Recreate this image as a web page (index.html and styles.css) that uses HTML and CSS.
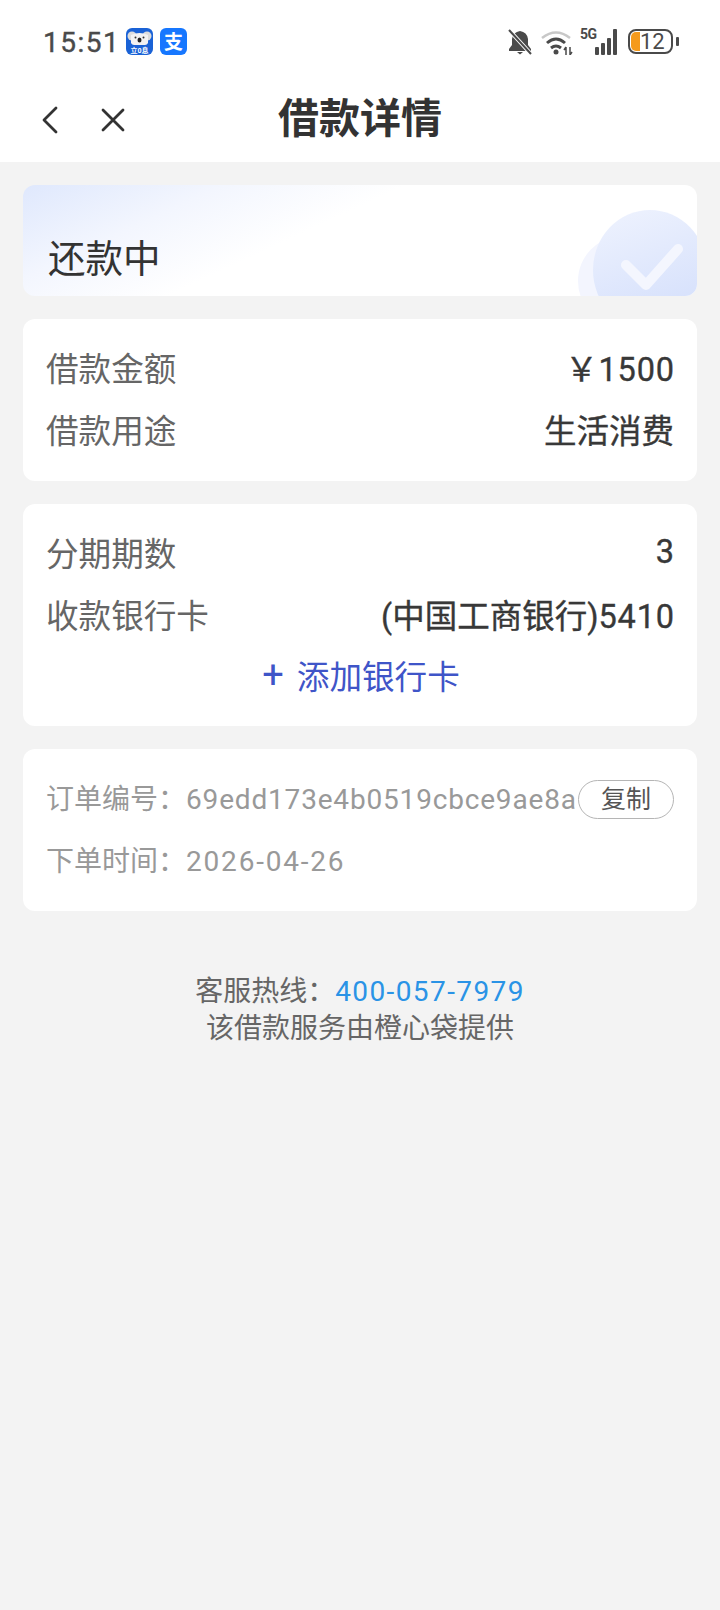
FILE: index.html
```html
<!DOCTYPE html>
<html lang="zh">
<head>
<meta charset="utf-8">
<title>借款详情</title>
<link rel="stylesheet" href="styles.css">
</head>
<body>
<header class="top">
  <div class="status">
    <div class="status-left">
      <span class="time">15:51</span>
      <svg class="app" viewBox="0 0 27 27"><rect width="27" height="27" rx="6" fill="#1a62d6"/><circle cx="6" cy="8" r="4.500" fill="#dcdcdc"/><circle cx="21" cy="8" r="4.500" fill="#dcdcdc"/><path d="M5 7q8.500-4 17 0v8q-1 2-3 2H8q-2 0-3-2z" fill="#f2f2f2"/><ellipse cx="13.500" cy="12" rx="2" ry="2.500" fill="#222"/><circle cx="9.500" cy="9.500" r="1" fill="#333"/><circle cx="17.500" cy="9.500" r="1" fill="#333"/><text class="app-small" x="13.500" y="25" text-anchor="middle">立0息</text></svg>
      <svg class="app" viewBox="0 0 27 27"><rect width="27" height="27" rx="6" fill="#1677ff"/><text class="app-big" x="13.500" y="21" text-anchor="middle">支</text></svg>
    </div>
    <div class="status-right">
      <svg class="i-bell" viewBox="0 0 24 26"><path d="M12 2q7 1 8 8v6l3 4v2H1v-2l3-4v-6q1-7 8-8zM9 23h6l-3 2.500z" fill="#4a4a4a"/><path d="M1 1l22 24" stroke="#fff" stroke-width="4"/><path d="M1 1l22 24" stroke="#4a4a4a" stroke-width="2"/></svg>
      <svg class="i-wifi" viewBox="0 0 32 26"><path d="M1 9q14-11 28 0" stroke="#c8c8c8" stroke-width="2.500" fill="none"/><path d="M6 14q9-8 18 0M10 19q5-4 10 0" stroke="#4a4a4a" stroke-width="3" fill="none"/><circle cx="15" cy="23" r="2.500" fill="#4a4a4a"/><path d="M25 18v8M29 18v8M23 21l2-3M31 23l-2 3" stroke="#4a4a4a" stroke-width="1.500" fill="none"/></svg>
      <div class="signal">
        <span class="five-g">5G</span>
        <svg class="i-signal" viewBox="0 0 28 26"><rect x="0" y="18" width="4" height="8" rx="1" fill="#4a4a4a"/><rect x="6" y="14" width="4" height="12" rx="1" fill="#4a4a4a"/><rect x="12" y="9" width="4" height="17" rx="1" fill="#4a4a4a"/><rect x="18" y="0" width="4" height="26" rx="1" fill="#4a4a4a"/></svg>
      </div>
      <div class="battery">
        <div class="batt-body"><span class="batt-fill"></span><span class="batt-num">12</span></div>
        <span class="batt-cap"></span>
      </div>
    </div>
  </div>
  <nav class="nav">
    <div class="nav-icons">
      <svg class="i-back" viewBox="0 0 16 28"><path d="M14 2L2 14l12 12" stroke="#333" stroke-width="2.800" fill="none" stroke-linecap="round" stroke-linejoin="round"/></svg>
      <svg class="i-close" viewBox="0 0 24 24"><path d="M2 2l20 20M22 2L2 22" stroke="#333" stroke-width="2.800" fill="none" stroke-linecap="round"/></svg>
    </div>
    <h1 class="title">借款详情</h1>
  </nav>
</header>
<main class="content">
  <section class="card status-card">
    <div class="badge">
      <span class="badge-shadow"></span>
      <span class="badge-circle"></span>
      <svg class="badge-check" viewBox="0 0 62 46"><path d="M5 21l20 20L57 5" stroke="#f4f6fe" stroke-width="10" fill="none" stroke-linecap="round" stroke-linejoin="round"/></svg>
    </div>
    <span class="status-text">还款中</span>
  </section>
  <section class="card info">
    <div class="row"><span class="label">借款金额</span><span class="value"><span class="num">￥1500</span></span></div>
    <div class="row"><span class="label">借款用途</span><span class="value">生活消费</span></div>
  </section>
  <section class="card info">
    <div class="row"><span class="label">分期期数</span><span class="value"><span class="num">3</span></span></div>
    <div class="row"><span class="label">收款银行卡</span><span class="value">(中国工商银行)<span class="num">5410</span></span></div>
    <div class="add"><span class="plus">+</span> 添加银行卡</div>
  </section>
  <section class="card order">
    <div class="order-row"><span class="order-text">订单编号<span class="colon">：</span><span class="hex">69edd173e4b0519cbce9ae8a</span></span><button class="copy">复制</button></div>
    <div class="order-row"><span class="order-text">下单时间<span class="colon">：</span><span class="date">2026-04-26</span></span></div>
  </section>
  <footer class="foot">
    <div>客服热线<span class="colon">：</span><span class="tel">400-057-7979</span></div>
    <div>该借款服务由橙心袋提供</div>
  </footer>
</main>
</body>
</html>
```
FILE: styles.css
```css
* { box-sizing: border-box; }
html, body { margin: 0; padding: 0; }
body {
  width: 720px;
  height: 1610px;
  overflow: hidden;
  background: #f3f3f3;
  font-family: "Roboto", "Noto Sans CJK SC", sans-serif;
  color: #333;
}
.top { background: #fff; height: 162px; }
.status {
  height: 83px;
  padding: 0 41px 0 43px;
  display: flex;
  justify-content: space-between;
  align-items: center;
}
.status-left { display: flex; align-items: center; gap: 7px; }
.time { font-size: 28px; color: #4a4a4a; -webkit-text-stroke: .4px #4a4a4a; letter-spacing: 1.500px; margin: 1px -1px 0 0; }
.app { width: 27px; height: 27px; }
.app-small { font-size: 7px; font-weight: 700; fill: #fff; }
.app-big { font-size: 19px; font-weight: 700; fill: #fff; }
.status-right { display: flex; align-items: center; }
.i-bell { width: 24px; height: 26px; }
.i-wifi { width: 32px; height: 26px; margin-left: 9px; }
.signal { position: relative; width: 37px; height: 26px; margin-left: 7px; }
.five-g { position: absolute; left: 0; top: -3px; font-size: 14px; line-height: 16px; font-weight: 700; color: #4a4a4a; letter-spacing: -.5px; }
.i-signal { position: absolute; right: -6px; bottom: 0; width: 28px; height: 26px; }
.battery { display: flex; align-items: center; margin-left: 11px; gap: 3px; }
.batt-body {
  position: relative;
  width: 45px;
  height: 25px;
  border: 2px solid #4a4a4a;
  border-radius: 8px;
  overflow: hidden;
  display: flex;
  align-items: center;
  padding-left: 10px;
}
.batt-fill { position: absolute; left: 1px; top: 1px; bottom: 1px; width: 9px; background: #f59a1c; border-radius: 5px 0 0 5px; }
.batt-num { position: relative; font-size: 22px; color: #4a4a4a; line-height: 1; }
.batt-cap { width: 3px; height: 9px; background: #4a4a4a; border-radius: 1px; }
.nav { position: relative; height: 79px; display: flex; align-items: center; justify-content: center; }
.nav-icons { position: absolute; left: 42px; top: 0; height: 74px; display: flex; align-items: center; gap: 43px; }
.i-back { width: 16px; height: 28px; }
.i-close { width: 24px; height: 24px; }
.title { margin: 0 0 5px; font-size: 41px; font-weight: 700; color: #333; line-height: 1.2; }
.content { padding: 23px 23px 0; display: flex; flex-direction: column; gap: 23px; }
.card { background: #fff; border-radius: 12px; }
.status-card {
  position: relative;
  height: 111px;
  overflow: hidden;
  padding: 49px 0 0 25px;
  background: linear-gradient(155deg, #dfe8fd 0%, #f3f6fe 22%, #fff 42%);
}
.status-text { position: relative; font-size: 37.500px; line-height: 50px; color: #333; display: block; }
.badge { position: absolute; right: 0; bottom: 0; width: 120px; height: 90px; }
.badge-shadow { position: absolute; left: 1px; top: 30px; width: 90px; height: 90px; border-radius: 50%; background: #f3f5fe; }
.badge-circle { position: absolute; left: 16px; top: 4px; width: 114px; height: 120px; border-radius: 50%; background: linear-gradient(160deg, #eff3fe, #d8e2fc 75%); }
.badge-check { position: absolute; left: 44px; top: 38px; width: 62px; height: 46px; }
.info { padding: 19px 23px; display: flex; flex-direction: column; }
.row { display: flex; justify-content: space-between; align-items: center; height: 62px; padding-bottom: 5px; white-space: nowrap; }
.label { color: #666; font-size: 32.600px; }
.value { color: #383838; font-size: 32.500px; -webkit-text-stroke: .35px #383838; }
.num { letter-spacing: .8px; margin-right: -.8px; }
.add { height: 60px; padding-bottom: 5px; display: flex; align-items: center; justify-content: center; color: #3f55c8; font-size: 32.600px; gap: 13px; }
.plus { font-size: 38px; line-height: 1; margin-left: 2px; }
.order { padding: 19px 23px; font-size: 28px; color: #999; }
.order-row { height: 62px; display: flex; align-items: center; white-space: nowrap; }
.order-text { margin-top: -4px; }
.colon { font-family: "Noto Sans CJK TC", sans-serif; }
.hex { letter-spacing: .82px; }
.date { letter-spacing: 1.800px; }
.copy {
  width: 96px;
  height: 39px;
  padding: 0;
  margin-left: auto;
  border: 1px solid #b5b5b5;
  border-radius: 20px;
  background: #fff;
  color: #555;
  font: inherit;
  font-size: 25px;
  line-height: 1;
}
.foot { margin-top: 37px; text-align: center; font-size: 28px; line-height: 37px; color: #666; }
.tel { color: #2a93e6; letter-spacing: 1.400px; }
```
